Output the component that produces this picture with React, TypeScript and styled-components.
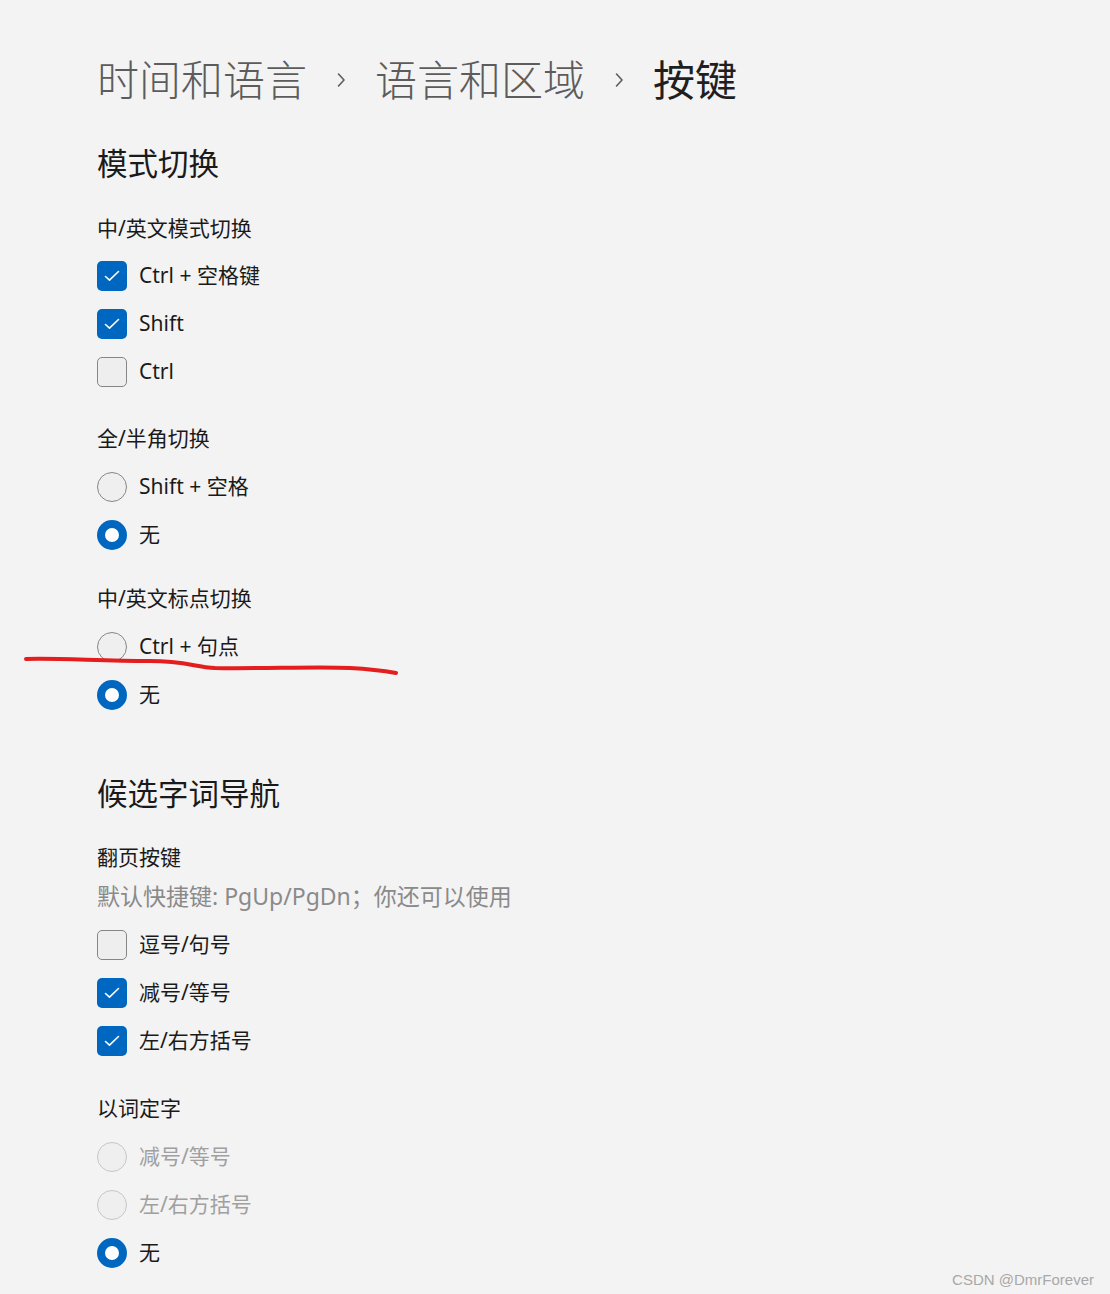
import React from "react";
import styled, { createGlobalStyle } from "styled-components";

const GlobalStyle = createGlobalStyle`
  html, body { margin: 0; padding: 0; background: #f3f3f3; }
  body { font-family: "Noto Sans", "Noto Sans CJK SC", sans-serif; color: #1b1b1b; }
`;

const Page = styled.div`
  position: relative;
  min-height: 1294px;
  box-sizing: border-box;
  padding: 52px 0 0 97px;
  background: #f3f3f3;
  overflow: hidden;
`;

const Breadcrumb = styled.div`
  display: flex;
  align-items: center;
  gap: 28px;
  height: 56px;
  font-size: 42px;
  font-weight: 300;
  line-height: 56px;
`;

const Crumb = styled.span<{ $current?: boolean }>`
  color: ${(p) => (p.$current ? "#1f1f1f" : "#5c5c5c")};
  font-weight: ${(p) => (p.$current ? 400 : 300)};
`;

const Chevron = styled.svg`
  width: 12px;
  height: 16px;
  flex: none;
`;

const SectionTitle = styled.h2<{ $mt: number }>`
  margin: ${(p) => p.$mt}px 0 0;
  font-size: 30.5px;
  font-weight: 400;
  line-height: 40px;
  color: #1a1a1a;
`;

const Group = styled.div<{ $mt: number }>`
  display: flex;
  flex-direction: column;
  margin-top: ${(p) => p.$mt}px;
`;

const GroupLabel = styled.div`
  font-size: 21px;
  line-height: 30px;
  color: #1a1a1a;
`;

const Description = styled.div`
  margin-top: 9px;
  font-size: 23px;
  line-height: 30px;
  color: #8a8a8a;
`;

const Options = styled.div<{ $mt?: number }>`
  display: flex;
  flex-direction: column;
  margin-top: ${(p) => p.$mt ?? 10}px;
`;

const Row = styled.div<{ $disabled?: boolean }>`
  display: flex;
  align-items: center;
  height: 48px;
  gap: 12px;
  font-size: 21px;
  line-height: 28px;
  color: ${(p) => (p.$disabled ? "#a0a0a0" : "#1a1a1a")};
`;

const RowText = styled.span`
  margin-top: -2px;
`;

const Box = styled.span<{ $checked?: boolean }>`
  width: 30px;
  height: 30px;
  box-sizing: border-box;
  border-radius: 5px;
  flex: none;
  display: flex;
  align-items: center;
  justify-content: center;
  background: ${(p) => (p.$checked ? "#0067c0" : "#eeeeee")};
  border: ${(p) => (p.$checked ? "none" : "1.5px solid #868686")};
`;

const Radio = styled.span<{ $checked?: boolean; $disabled?: boolean }>`
  width: 30px;
  height: 30px;
  box-sizing: border-box;
  border-radius: 50%;
  flex: none;
  display: flex;
  align-items: center;
  justify-content: center;
  background: ${(p) => (p.$checked ? "#0067c0" : "#efefef")};
  border: ${(p) =>
    p.$checked ? "none" : p.$disabled ? "1.5px solid #c6c6c6" : "1.5px solid #868686"};
`;

const Dot = styled.span`
  width: 14px;
  height: 14px;
  border-radius: 50%;
  background: #ffffff;
`;

const Scribble = styled.svg`
  position: absolute;
  left: 0;
  top: 0;
  pointer-events: none;
`;

const Watermark = styled.div`
  position: absolute;
  right: 16px;
  bottom: 6px;
  font-family: "Liberation Sans", Arial, sans-serif;
  font-size: 15px;
  color: #a8a8a8;
`;

const Check = () => (
  <svg width="16" height="12" viewBox="0 0 16 12">
    <path d="M1.5 6.5 L5.5 10.2 L14.5 1.5" fill="none" stroke="#fff" strokeWidth="1.6" strokeLinecap="round" strokeLinejoin="round" />
  </svg>
);

const CheckRow = ({ checked, label }: { checked?: boolean; label: string }) => (
  <Row>
    <Box $checked={checked}>{checked && <Check />}</Box>
    <RowText>{label}</RowText>
  </Row>
);

const RadioRow = ({ checked, disabled, label }: { checked?: boolean; disabled?: boolean; label: string }) => (
  <Row $disabled={disabled}>
    <Radio $checked={checked} $disabled={disabled}>{checked && <Dot />}</Radio>
    <RowText>{label}</RowText>
  </Row>
);

const Chev = () => (
  <Chevron viewBox="0 0 12 16">
    <path d="M3.5 2 L9 8 L3.5 14" fill="none" stroke="#5c5c5c" strokeWidth="1.6" strokeLinecap="round" strokeLinejoin="round" />
  </Chevron>
);

export default function App() {
  return (
    <>
      <GlobalStyle />
      <Page>
        <Breadcrumb>
          <Crumb>时间和语言</Crumb>
          <Chev />
          <Crumb>语言和区域</Crumb>
          <Chev />
          <Crumb $current>按键</Crumb>
        </Breadcrumb>

        <SectionTitle $mt={35}>模式切换</SectionTitle>
        <Group $mt={30}>
          <GroupLabel>中/英文模式切换</GroupLabel>
          <Options $mt={9}>
            <CheckRow checked label="Ctrl + 空格键" />
            <CheckRow checked label="Shift" />
            <CheckRow label="Ctrl" />
          </Options>
        </Group>
        <Group $mt={27}>
          <GroupLabel>全/半角切换</GroupLabel>
          <Options>
            <RadioRow label="Shift + 空格" />
            <RadioRow checked label="无" />
          </Options>
        </Group>
        <Group $mt={24}>
          <GroupLabel>中/英文标点切换</GroupLabel>
          <Options>
            <RadioRow label="Ctrl + 句点" />
            <RadioRow checked label="无" />
          </Options>
        </Group>

        <SectionTitle $mt={54}>候选字词导航</SectionTitle>
        <Group $mt={29}>
          <GroupLabel>翻页按键</GroupLabel>
          <Description>默认快捷键: PgUp/PgDn；你还可以使用</Description>
          <Options>
            <CheckRow label="逗号/句号" />
            <CheckRow checked label="减号/等号" />
            <CheckRow checked label="左/右方括号" />
          </Options>
        </Group>
        <Group $mt={28}>
          <GroupLabel>以词定字</GroupLabel>
          <Options>
            <RadioRow disabled label="减号/等号" />
            <RadioRow disabled label="左/右方括号" />
            <RadioRow checked label="无" />
          </Options>
        </Group>

        <Scribble width="1110" height="1294" viewBox="0 0 1110 1294">
          <path
            d="M26 659 C 60 658, 100 661, 150 661 C 185 661, 195 667, 215 668 C 260 669, 320 666, 350 668 C 370 669, 385 671, 396 673"
            fill="none"
            stroke="#e41e1e"
            strokeWidth="4"
            strokeLinecap="round"
          />
        </Scribble>
        <Watermark>CSDN @DmrForever</Watermark>
      </Page>
    </>
  );
}
